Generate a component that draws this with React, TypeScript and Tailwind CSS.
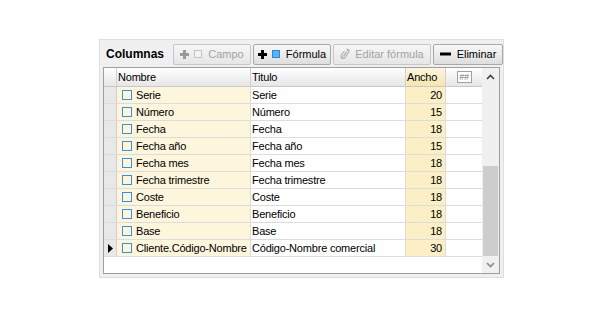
import { ReactNode } from "react";

interface Row {
  nombre: string;
  titulo: string;
  ancho: number;
  current?: boolean;
}

const rows: Row[] = [
  { nombre: "Serie", titulo: "Serie", ancho: 20 },
  { nombre: "Número", titulo: "Número", ancho: 15 },
  { nombre: "Fecha", titulo: "Fecha", ancho: 18 },
  { nombre: "Fecha año", titulo: "Fecha año", ancho: 15 },
  { nombre: "Fecha mes", titulo: "Fecha mes", ancho: 18 },
  { nombre: "Fecha trimestre", titulo: "Fecha trimestre", ancho: 18 },
  { nombre: "Coste", titulo: "Coste", ancho: 18 },
  { nombre: "Beneficio", titulo: "Beneficio", ancho: 18 },
  { nombre: "Base", titulo: "Base", ancho: 18 },
  { nombre: "Cliente.Código-Nombre", titulo: "Código-Nombre comercial", ancho: 30, current: true },
];

const PlusIcon = ({ disabled }: { disabled?: boolean }) => (
  <svg width="9" height="9" viewBox="0 0 9 9">
    <path d="M3 0h3v3h3v3H6v3H3V6H0V3h3z" fill={disabled ? "#9a9a9a" : "#000"} />
  </svg>
);

const BoxIcon = ({ disabled }: { disabled?: boolean }) => (
  <svg width="8" height="8" viewBox="0 0 8 8">
    <rect
      x="0.5"
      y="0.5"
      width="7"
      height="7"
      fill={disabled ? "#f4f4f4" : "#56b4ff"}
      stroke={disabled ? "#c4c4c4" : "#2f86d8"}
    />
  </svg>
);

const LinkIcon = () => (
  <svg width="10" height="12" viewBox="0 0 10 12" fill="none" stroke="#b0b0b0" strokeWidth="1.2">
    <path d="M6.5 1.5a2 2 0 0 1 2.2 2.8L5 9.5a2.2 2.2 0 0 1-3.6-2.5L4.5 3" />
    <path d="M6.2 4.5 3.6 8.2" />
    <path d="M1.2 10.8 8.8 1.2" strokeWidth="0.9" />
  </svg>
);

const MinusIcon = () => (
  <svg width="11" height="4" viewBox="0 0 11 4">
    <rect x="0" y="0.5" width="11" height="3" fill="#000" />
  </svg>
);

interface ToolButtonProps {
  width: string;
  disabled?: boolean;
  children: ReactNode;
}

const ToolButton = ({ width, disabled, children }: ToolButtonProps) => (
  <div
    className={`${width} h-[21px] flex items-center justify-center gap-[5px] rounded-[2px] border ${
      disabled
        ? "border-[#c6c6c6] text-[#a3a3a3] bg-gradient-to-b from-[#f6f6f6] to-[#e6e6e6]"
        : "border-[#a9a9a9] text-black bg-gradient-to-b from-[#f7f7f7] via-[#ececec] to-[#dddddd]"
    }`}
  >
    {children}
  </div>
);

const Chevron = ({ up }: { up?: boolean }) => (
  <svg width="9" height="6" viewBox="0 0 9 6" fill="none" stroke={up ? "#404040" : "#8a8a8a"} strokeWidth="1.6">
    {up ? <path d="M1 5 4.5 1.5 8 5" /> : <path d="M1 1 4.5 4.5 8 1" />}
  </svg>
);

export default function App() {
  return (
    <div className="w-[600px] h-[318px] bg-white pt-[39px] pl-[99px] font-['Liberation_Sans',Arial,sans-serif] text-[11px] text-black">
      <div className="w-[405px] h-[239px] bg-[#f0f0f0] border border-[#dedede] flex flex-col">
        {/* toolbar */}
        <div className="h-[27px] flex items-center pl-[6px] pt-[1px]">
          <span className="text-[12px] font-bold w-[67px]">Columnas</span>
          <div className="flex items-center gap-[2px]">
            <ToolButton width="w-[78px]" disabled>
              <PlusIcon disabled />
              <BoxIcon disabled />
              <span className="ml-[1px]">Campo</span>
            </ToolButton>
            <ToolButton width="w-[78px]">
              <PlusIcon />
              <BoxIcon />
              <span className="ml-[1px]">Fórmula</span>
            </ToolButton>
            <ToolButton width="w-[98px]" disabled>
              <LinkIcon />
              <span>Editar fórmula</span>
            </ToolButton>
            <ToolButton width="w-[70px]">
              <MinusIcon />
              <span className="ml-[1px]">Eliminar</span>
            </ToolButton>
          </div>
        </div>

        {/* grid */}
        <div className="ml-[3px] w-[397px] h-[207px] border border-[#9e9e9e] bg-white flex tracking-[-0.2px]">
          <div className="w-[378px] flex flex-col">
            <div className="h-[19px] flex border-b border-[#c8c8c8] bg-gradient-to-b from-white to-[#e6e6e6]">
              <div className="w-[13px] border-r border-[#d0d0d0]" />
              <div className="w-[134px] border-r border-[#d0d0d0] pl-[1px] flex items-center">Nombre</div>
              <div className="w-[155px] border-r border-[#d0d0d0] pl-[1px] flex items-center">Titulo</div>
              <div className="w-[40px] border-r border-[#d0d0d0] pl-[1px] flex items-center bg-gradient-to-b from-[#fdf6df] to-[#f6e5b0]">
                Ancho
              </div>
              <div className="w-[36px] flex items-center justify-center">
                <span className="w-[15px] h-[12px] border border-[#a0a0a0] bg-white text-[9px] leading-[10px] text-[#7a7a7a] flex items-center justify-center tracking-[-0.3px]">
                  ##
                </span>
              </div>
            </div>
            {rows.map((r) => (
              <div key={r.nombre} className="h-[17px] flex border-b border-[#dcdcdc]">
                <div className="w-[13px] bg-[#e8e8e8] border-r border-[#d0d0d0] flex items-center justify-center">
                  {r.current && (
                    <svg width="5" height="9" viewBox="0 0 5 9">
                      <path d="M0 0 5 4.5 0 9z" fill="#000" />
                    </svg>
                  )}
                </div>
                <div className="w-[134px] bg-[#fdf5dc] border-r border-[#dcdcdc] pl-[5px] flex items-center gap-[4px] whitespace-nowrap">
                  <span className="w-[10px] h-[10px] border border-[#3b8fdf] shrink-0" />
                  <span>{r.nombre}</span>
                </div>
                <div className="w-[155px] border-r border-[#dcdcdc] pl-[1px] flex items-center whitespace-nowrap">{r.titulo}</div>
                <div className="w-[40px] bg-[#fcefc6] border-r border-[#dcdcdc] pr-[3px] flex items-center justify-end">{r.ancho}</div>
                <div className="w-[36px]" />
              </div>
            ))}
          </div>

          {/* scrollbar */}
          <div className="w-[17px] bg-[#f0f0f0] flex flex-col">
            <div className="h-[17px] flex items-center justify-center">
              <Chevron up />
            </div>
            <div className="flex-1 flex flex-col">
              <div className="h-[81px]" />
              <div className="h-[90px] mx-[1px] bg-[#cdcdcd]" />
            </div>
            <div className="h-[17px] flex items-center justify-center">
              <Chevron />
            </div>
          </div>
        </div>
      </div>
    </div>
  );
}
